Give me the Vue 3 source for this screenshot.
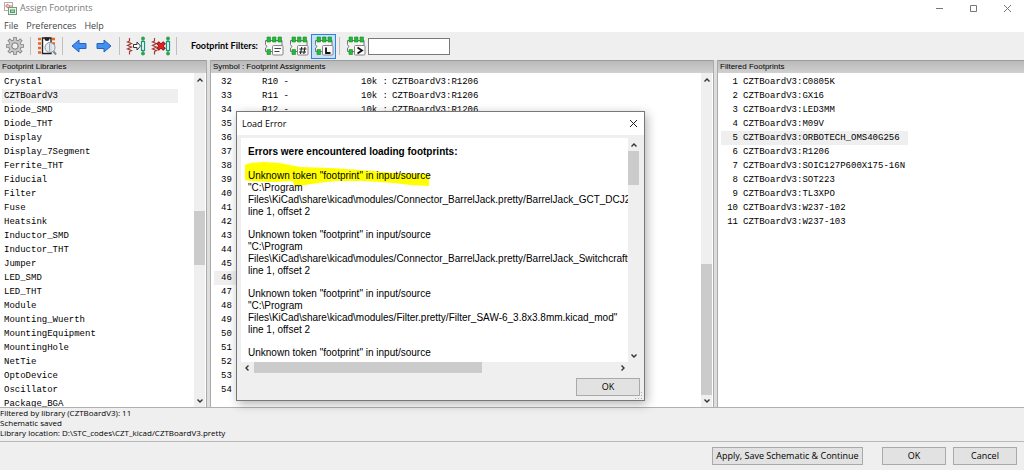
<script setup>
import { ref } from 'vue'

const menus = ['File', 'Preferences', 'Help']

const libraries = [
  'Crystal', 'CZTBoardV3', 'Diode_SMD', 'Diode_THT', 'Display', 'Display_7Segment',
  'Ferrite_THT', 'Fiducial', 'Filter', 'Fuse', 'Heatsink', 'Inductor_SMD', 'Inductor_THT',
  'Jumper', 'LED_SMD', 'LED_THT', 'Module', 'Mounting_Wuerth', 'MountingEquipment',
  'MountingHole', 'NetTie', 'OptoDevice', 'Oscillator', 'Package_BGA',
]
const selectedLibrary = ref('CZTBoardV3')

const known = { 32: 'R10', 33: 'R11', 34: 'R12' }
const assignments = Array.from({ length: 23 }, (_, i) => ({ n: i + 32, symbol: known[i + 32] }))
const selectedAssignment = ref(46)

const footprints = [
  'C0805K', 'GX16', 'LED3MM', 'M09V', 'ORBOTECH_OMS40G256', 'R1206',
  'SOIC127P600X175-16N', 'SOT223', 'TL3XPO', 'W237-102', 'W237-103',
]
const selectedFootprint = ref('ORBOTECH_OMS40G256')

const pattern = ref('')
const filters = [
  { key: 'keyword', label: 'Filter by keywords' },
  { key: 'pins', label: 'Filter by pin count' },
  { key: 'library', label: 'Filter by library' },
  { key: 'pattern', label: 'Filter by pattern' },
]
const activeFilter = ref('library')

const errors = [
  'Connector_BarrelJack.pretty/BarrelJack_GCT_DCJ200-',
  'Connector_BarrelJack.pretty/BarrelJack_SwitchcraftCo',
  'Filter.pretty/Filter_SAW-6_3.8x3.8mm.kicad_mod"',
]
</script>

<template>
  <div class="app">
    <header class="titlebar">
      <svg class="logo" viewBox="0 0 13 13" aria-hidden="true">
        <rect x="0.5" y="0.5" width="8" height="8" fill="#fff" stroke="#b0b0b0" />
        <path d="M1 4h2M3 2v4l3-2zM6 4h3" stroke="#d87868" fill="none" />
        <rect x="4.500" y="5.500" width="8" height="7" fill="#e8f4ea" stroke="#7d9586" />
        <rect x="6.500" y="8" width="4" height="2.500" fill="#9fe0ae" stroke="#45a060" />
      </svg>
      <span class="title">Assign Footprints</span>
      <div class="window-buttons">
        <button aria-label="Minimize"><svg viewBox="0 0 9 9"><path d="M1 4.500h7" /></svg></button>
        <button aria-label="Maximize"><svg viewBox="0 0 9 9"><path d="M1.500 1.500h6v6h-6z" /></svg></button>
        <button aria-label="Close"><svg viewBox="0 0 9 9"><path d="M1 1l7 7M8 1l-7 7" /></svg></button>
      </div>
    </header>

    <nav class="menubar">
      <button v-for="m in menus" :key="m">{{ m }}</button>
    </nav>

    <div class="toolbar">
      <button class="tool" aria-label="Configure libraries">
        <svg viewBox="0 0 20 20">
          <g stroke="#848484" stroke-width="3.600">
            <path d="M10 1v18M1 10h18M3.600 3.600l12.800 12.800M16.400 3.600L3.600 16.400" />
          </g>
          <circle cx="10" cy="10" r="6.600" fill="#848484" />
          <g stroke="#c8c8c8" stroke-width="2">
            <path d="M10 1.800v16.400M1.800 10h16.400M4.200 4.200l11.600 11.600M15.800 4.200L4.200 15.800" />
          </g>
          <circle cx="10" cy="10" r="5.800" fill="#c8c8c8" />
          <circle cx="10" cy="10" r="3.200" fill="#efefef" stroke="#777" />
        </svg>
      </button>
      <i class="sep"></i>
      <button class="tool" aria-label="View selected footprint">
        <svg viewBox="0 0 20 20">
          <path d="M1 3h3M1 7.500h3M1 12h3M1 16.500h3M15 3h3M15 7.500h3" stroke="#ee6420" stroke-width="2.600" />
          <path d="M5.500 2h8.500v15.500H5.500z" fill="#fff" stroke="#222" stroke-width="1.400" />
          <path d="M7.500 1.500h5v1.500a2.500 2 0 0 1-5 0z" fill="#222" />
          <circle cx="13" cy="11.500" r="5" fill="#e3eaf0" fill-opacity=".9" stroke="#8b9299" />
          <path d="M12.500 7.500v8" stroke="#97a8b4" />
          <path d="M16.500 15.500l2.500 3" stroke="#888" stroke-width="2" />
        </svg>
      </button>
      <i class="sep"></i>
      <button class="tool" aria-label="Previous">
        <svg viewBox="0 0 20 20"><path d="M3 10l7-6v3.500h7v5h-7V16z" fill="#448ff2" stroke="#2464b8" /></svg>
      </button>
      <button class="tool" aria-label="Next">
        <svg viewBox="0 0 20 20"><path d="M17 10l-7-6v3.500H3v5h7V16z" fill="#448ff2" stroke="#2464b8" /></svg>
      </button>
      <i class="sep"></i>
      <button class="tool" aria-label="Automatic association">
        <svg viewBox="0 0 20 20">
          <path d="M3.500 2v3l-2 1 4 1.500-4 2 4 1.500-4 2 4 1.500-2 1v3" fill="none" stroke="#a43e32" stroke-width="1.200" />
          <path d="M7.500 8.500h3.500V6l3.500 4-3.500 4v-2.500H7.500z" fill="#fff" stroke="#333" />
          <path d="M17 1v18" stroke="#1a9a86" />
          <rect x="15.500" y="5.500" width="3" height="9" fill="#e9fbf7" stroke="#16967d" stroke-width="1.200" />
          <circle cx="17" cy="2.500" r="1.900" fill="#2ea54b" /><circle cx="17" cy="17.500" r="1.900" fill="#2ea54b" />
        </svg>
      </button>
      <button class="tool" aria-label="Delete all associations">
        <svg viewBox="0 0 20 20">
          <path d="M3.500 2v3l-2 1 4 1.500-4 2 4 1.500-4 2 4 1.500-2 1v3" fill="none" stroke="#a43e32" stroke-width="1.200" />
          <path d="M17 1v18" stroke="#1a9a86" />
          <rect x="15.500" y="5.500" width="3" height="9" fill="#e9fbf7" stroke="#16967d" stroke-width="1.200" />
          <circle cx="17" cy="2.500" r="1.900" fill="#2ea54b" /><circle cx="17" cy="17.500" r="1.900" fill="#2ea54b" />
          <path d="M6.500 6.500l7 7M13.500 6.500l-7 7" stroke="#611" stroke-width="3.800" />
          <path d="M7 7l6 6M13 7l-6 6" stroke="#e81d1d" stroke-width="2.600" />
        </svg>
      </button>
      <i class="sep"></i>
      <label class="filter-label" for="pattern">Footprint Filters:</label>
      <template v-for="f in filters" :key="f.key">
        <i v-if="f.key === 'pattern'" class="sep"></i>
        <button class="tool filter" :class="{ active: activeFilter === f.key }" :aria-label="f.label" @click="activeFilter = f.key">
          <svg viewBox="0 0 20 20">
            <path d="M1.500 4.500h16.500v11H1.500v-3.500q3-1 0-3.500z" fill="#f4f4f4" stroke="#777" />
            <path d="M3 1h3.500v5H3zM8.500 1H12v5H8.500zM14 1h3.500v5H14zM3 13.500h3.500v5H3z" fill="#22bd35" stroke="#188b27" stroke-width=".6" />
            <rect x="8.500" y="9.500" width="10.500" height="9.500" rx="1" fill="#fafafa" stroke="#888" />
            <path v-if="f.key === 'keyword'" d="M10.500 12.500h6.500M10.500 15.500h5" stroke="#444" stroke-width="1.200" />
            <path v-else-if="f.key === 'pins'" d="M12.700 11l-1.200 7M16 11l-1.200 7M10.500 13h7M10 16h7" stroke="#222" stroke-width="1.100" />
            <path v-else-if="f.key === 'library'" d="M12 11.500v5.500h4.500" fill="none" stroke="#111" stroke-width="1.800" />
            <path v-else d="M11.500 11.500l4.500 3-4.500 3" fill="none" stroke="#111" stroke-width="1.800" />
          </svg>
        </button>
      </template>
      <input id="pattern" v-model="pattern" class="pattern" type="text" />
    </div>

    <main class="panels">
      <section class="panel">
        <h2>Footprint Libraries</h2>
        <div class="body">
          <ul class="rows libraries">
            <li v-for="l in libraries" :key="l" :class="{ selected: l === selectedLibrary }" @click="selectedLibrary = l">{{ l }}</li>
          </ul>
          <div class="vbar">
            <svg viewBox="0 0 8 8"><path d="M1.500 5.500L4 3l2.500 2.500" /></svg>
            <div class="track"><div class="thumb lib-thumb"></div></div>
            <svg viewBox="0 0 8 8"><path d="M1.500 2.500L4 5l2.500-2.500" /></svg>
          </div>
        </div>
      </section>
      <section class="panel">
        <h2>Symbol : Footprint Assignments</h2>
        <div class="body">
          <ul class="rows assignments">
            <li v-for="a in assignments" :key="a.n" :class="{ selected: a.n === selectedAssignment }" @click="selectedAssignment = a.n">
              <span>{{ a.n }}</span>
              <template v-if="a.symbol">
                <span>{{ a.symbol }} -</span><span>10k :</span><span>CZTBoardV3:R1206</span>
              </template>
            </li>
          </ul>
          <div class="vbar">
            <svg viewBox="0 0 8 8"><path d="M1.500 5.500L4 3l2.500 2.500" /></svg>
            <div class="track"><div class="thumb sym-thumb"></div></div>
            <svg viewBox="0 0 8 8"><path d="M1.500 2.500L4 5l2.500-2.500" /></svg>
          </div>
        </div>
      </section>
      <section class="panel">
        <h2>Filtered Footprints</h2>
        <div class="body">
          <ul class="rows footprints">
            <li v-for="(f, i) in footprints" :key="f" :class="{ selected: f === selectedFootprint }" @click="selectedFootprint = f">
              <span class="num">{{ i + 1 }}</span><span>CZTBoardV3:{{ f }}</span>
            </li>
          </ul>
        </div>
      </section>
    </main>

    <div class="status">
      <p>Filtered by library (CZTBoardV3): 11</p>
      <p>Schematic saved</p>
      <p>Library location: D:\STC_codes\CZT_kicad/CZTBoardV3.pretty</p>
    </div>

    <footer class="actions">
      <button class="push apply">Apply, Save Schematic &amp; Continue</button>
      <button class="push">OK</button>
      <button class="push">Cancel</button>
    </footer>

    <div class="dialog" role="dialog" aria-labelledby="dialog-title">
      <div class="dialog-title">
        <span id="dialog-title">Load Error</span>
        <button aria-label="Close dialog"><svg viewBox="0 0 9 9"><path d="M1 1l7 7M8 1l-7 7" /></svg></button>
      </div>
      <div class="dialog-body">
        <div class="report">
          <div class="report-text">
            <h3>Errors were encountered loading footprints:</h3>
            <div v-for="(e, i) in errors" :key="e" class="error">
              <svg v-if="i === 0" class="marker" viewBox="0 0 186 26" aria-hidden="true">
                <path d="M1 4L6 2 19 1 35 2 46 4 56 6 86 7 101 8 130 10 151 12 185 13V25L166 24 150 22 120 20 92 20 74 22 61 24 50 25 49 20 30 21 6 20 1 19z" fill="#ffff00" />
              </svg>
              <p>Unknown token "footprint" in input/source</p>
              <p>"C:\Program</p>
              <p>Files\KiCad\share\kicad\modules/{{ e }}</p>
              <p>line 1, offset 2</p>
            </div>
            <div class="error"><p>Unknown token "footprint" in input/source</p></div>
          </div>
          <div class="vbar">
            <svg viewBox="0 0 8 8"><path d="M1.500 5.500L4 3l2.500 2.500" /></svg>
            <div class="track"><div class="thumb report-thumb"></div></div>
            <svg viewBox="0 0 8 8"><path d="M1.500 2.500L4 5l2.500-2.500" /></svg>
          </div>
        </div>
        <div class="hbar">
          <svg viewBox="0 0 8 8"><path d="M5.500 1.500L3 4l2.500 2.500" /></svg>
          <div class="htrack"><div class="hthumb"></div></div>
          <svg viewBox="0 0 8 8"><path d="M2.500 1.500L5 4 2.500 6.500" /></svg>
        </div>
        <div class="dialog-actions"><button class="push">OK</button></div>
      </div>
      <svg class="grip" viewBox="0 0 8 8" aria-hidden="true">
        <path d="M6 0h1v1H6zM3 3h1v1H3zM6 3h1v1H6zM0 6h1v1H0zM3 6h1v1H3zM6 6h1v1H6z" fill="#aaa" />
      </svg>
    </div>
  </div>
</template>

<style>
body {
  background: #efefef;
}
</style>

<style scoped>
* {
  box-sizing: border-box;
  margin: 0;
  padding: 0;
}
.app {
  position: relative;
  display: flex;
  flex-direction: column;
  height: 100vh;
  overflow: hidden;
  background: #efefef;
  color: #000;
  font: 9px/12px "Open Sans", "Noto Sans", sans-serif;
}
button {
  border: 0;
  background: none;
  font: inherit;
  color: inherit;
}
.titlebar {
  display: flex;
  align-items: center;
  height: 16px;
  padding-left: 4px;
  background: #fff;
  color: #777;
}
.logo {
  width: 13px;
  height: 13px;
}
.title {
  margin-left: 3px;
}
.window-buttons {
  display: flex;
  margin-left: auto;
}
.window-buttons button {
  width: 34px;
  height: 14px;
}
.window-buttons svg,
.dialog-title svg {
  display: block;
  width: 9px;
  height: 9px;
  margin: 0 auto;
  fill: none;
  stroke: #777;
}
.menubar {
  display: flex;
  gap: 8px;
  height: 16px;
  padding: 3px 4px 0;
  background: #fff;
  color: #444;
}
.toolbar {
  display: flex;
  align-items: center;
  height: 28px;
  padding-left: 2px;
}
.tool {
  flex: none;
  width: 25px;
  height: 25px;
}
.tool svg {
  display: block;
  width: 20px;
  height: 20px;
  margin: 0 auto;
  fill: none;
}
.filter.active {
  background: #c9e1f8;
  outline: 1px solid #2b83dc;
  outline-offset: -1px;
}
.sep {
  width: 1px;
  height: 18px;
  margin: 0 3px;
  background: #c0c0c0;
}
.filter-label {
  margin: 0 0 0 11px;
  width: 70px;
  font-family: Lato, "Open Sans", sans-serif;
  font-weight: 700;
  white-space: nowrap;
}
.pattern {
  width: 82px;
  height: 17px;
  border: 1px solid #7a7a7a;
  background: #fff;
  font: inherit;
}
.panels {
  flex: 1;
  min-height: 0;
  display: grid;
  grid-template-columns: 207fr 504fr 307fr;
  gap: 3px;
  background: #dedede;
  border-bottom: 1px solid #b0b0b0;
}
.panel {
  display: flex;
  flex-direction: column;
  min-width: 0;
  min-height: 0;
  border-right: 1px solid #aaa;
  background: #fff;
}
.panel + .panel {
  border-left: 1px solid #aaa;
}
.panel:last-child {
  border-right: 0;
}
.panel h2 {
  flex: none;
  height: 13px;
  padding-left: 2px;
  border-top: 1px solid #9c9c9c;
  background: linear-gradient(#bababa, #d0d0d0);
  font: 8px/12px "Liberation Sans", sans-serif;
}
.body {
  flex: 1;
  min-height: 0;
  display: flex;
  justify-content: space-between;
}
.rows {
  flex: 1;
  overflow: hidden;
  padding-top: 2px;
  list-style: none;
  font: 9px/14px "Liberation Mono", monospace;
  white-space: nowrap;
}
.rows .selected {
  background: #efefef;
}
.libraries {
  padding-left: 2px;
}
.libraries li {
  width: 176px;
  padding-left: 2px;
}
.assignments {
  padding-left: 3px;
}
.assignments li {
  display: grid;
  grid-template-columns: 41px 99px 31px auto;
  width: 400px;
  height: 14px;
  padding-left: 7px;
}
.footprints {
  padding-left: 3px;
}
.footprints li {
  display: flex;
  gap: 5px;
  width: 187px;
}
.num {
  width: 17px;
  text-align: right;
}
.vbar {
  flex: none;
  display: flex;
  flex-direction: column;
  align-items: center;
  width: 11px;
  margin-right: 1px;
  padding: 3px 0 2px;
  background: #efefef;
}
.vbar svg,
.hbar svg {
  flex: none;
  width: 8px;
  height: 8px;
  fill: none;
  stroke: #333;
  stroke-width: 1.4;
}
.track {
  flex: 1;
  width: 100%;
  margin: 2px 0;
}
.thumb {
  width: 100%;
  background: #cbcbcb;
}
.lib-thumb {
  height: 54px;
  margin-top: 125px;
}
.sym-thumb {
  height: 131px;
  margin-top: 178px;
}
.status {
  padding-bottom: 3px;
  border-bottom: 1px solid #b8b8b8;
  font-size: 8px;
  line-height: 10px;
}
.actions {
  display: flex;
  justify-content: flex-end;
  height: 28px;
  padding: 5px 7px 5px 0;
}
.push {
  width: 64px;
  height: 18px;
  border: 1px solid #a9a9a9;
  background: #e2e2e2;
  line-height: 14px;
  white-space: nowrap;
}
.actions .push {
  margin-left: 7px;
}
.actions .apply {
  width: 151px;
  margin-right: 12px;
}
.dialog {
  position: absolute;
  left: 236px;
  top: 111px;
  width: 409px;
  border: 1px solid #777;
  background: #efefef;
  box-shadow: 2px 3px 10px rgba(0, 0, 0, 0.3);
}
.dialog-title {
  display: flex;
  align-items: center;
  justify-content: space-between;
  height: 23px;
  padding: 0 5px;
  background: #fff;
}
.dialog-title button {
  width: 12px;
  height: 12px;
}
.dialog-title svg {
  stroke: #222;
}
.dialog-body {
  padding: 3px 4px 4px;
}
.report {
  display: flex;
  height: 224px;
}
.report-text {
  flex: 1;
  overflow: hidden;
  padding: 8px 0 0 7px;
  background: #fff;
  font: 10px/12px "Liberation Sans", sans-serif;
  white-space: nowrap;
}
.report-text h3 {
  margin-bottom: 12px;
  font-size: 10px;
}
.error {
  position: relative;
  margin-bottom: 11px;
}
.error p {
  position: relative;
}
.marker {
  position: absolute;
  left: -4px;
  top: -9px;
  width: 186px;
  height: 26px;
}
.report-thumb {
  height: 34px;
}
.hbar {
  display: flex;
  align-items: center;
  height: 11px;
  padding: 0 13px 0 2px;
}
.htrack {
  flex: 1;
  margin: 0 3px;
}
.hthumb {
  width: 63%;
  height: 11px;
  background: #cbcbcb;
}
.dialog-actions {
  display: flex;
  justify-content: flex-end;
  padding-top: 5px;
}
.grip {
  position: absolute;
  right: 1px;
  bottom: 0;
  width: 8px;
  height: 8px;
}
</style>
